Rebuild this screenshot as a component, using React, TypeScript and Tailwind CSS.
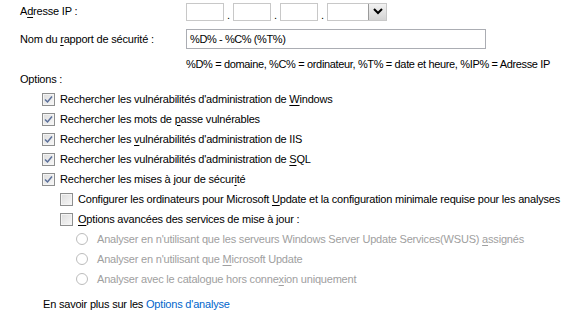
import React from 'react'

const font = { fontFamily: '"Liberation Sans", Arial, sans-serif' }

// Underlined accelerator letter, like a Windows dialog
function U({ children }: { children: React.ReactNode }) {
    return <span className="underline underline-offset-[2px]">{children}</span>
}

function CheckBox({ checked }: { checked: boolean }) {
    return (
        <div className="w-[13px] h-[13px] border border-[#8e8f8f] bg-gradient-to-br from-[#dcdcdc] to-[#f8f8f8] flex items-center justify-center shrink-0">
            <div className="w-[11px] h-[11px] border border-[#f4f4f4] flex items-center justify-center">
                {checked && (
                    <svg width="9" height="9" viewBox="0 0 9 9">
                        <path d="M1 4.5 L3.5 7 L8 1.5" fill="none" stroke="#5a6f9a" strokeWidth="1.5" />
                    </svg>
                )}
            </div>
        </div>
    )
}

function Radio() {
    return <div className="w-[12px] h-[12px] rounded-full border border-[#bcbcbc] bg-white shrink-0" />
}

function Row({ children, indent }: { children: React.ReactNode; indent: string }) {
    return <div className={`h-5 flex items-center ${indent}`}>{children}</div>
}

function IpBox() {
    return <div className="w-[38px] h-[18px] border border-[#c8c8c8] bg-white" />
}

export default function App() {
    return (
        <div className="w-[573px] h-[316px] bg-white text-[11px] tracking-[-0.2px] whitespace-nowrap text-black overflow-hidden pt-[2px]" style={font}>

            {/* IP address */}
            <div className="h-[19px] flex items-center">
                <div className="w-[186px] pl-[20px]">A<U>d</U>resse IP :</div>
                <div className="flex items-end gap-[2px]">
                    <IpBox />
                    <span className="w-[5px] text-center leading-none">.</span>
                    <IpBox />
                    <span className="w-[5px] text-center leading-none">.</span>
                    <IpBox />
                    <span className="w-[5px] text-center leading-none">.</span>
                    <div className="w-[60px] h-[18px] border border-[#c8c8c8] bg-white flex justify-end">
                        <div className="w-[18px] h-full border-l border-[#9a9a9a] bg-gradient-to-b from-[#f2f2f2] to-[#d4d4d4] flex items-center justify-center">
                            <svg width="10" height="7" viewBox="0 0 10 7">
                                <path d="M1 1 L5 5 L9 1" fill="none" stroke="#000" strokeWidth="2" />
                            </svg>
                        </div>
                    </div>
                </div>
            </div>

            {/* Report name */}
            <div className="h-[20px] mt-[8px] flex items-center">
                <div className="w-[186px] pl-[20px]">Nom du <U>r</U>apport de sécurité :</div>
                <div className="w-[300px] h-[20px] border border-[#abadb3] bg-white flex items-center px-[3px] tracking-[-0.4px]">
                    %D% - %C% (%T%)
                </div>
            </div>

            <div className="h-[14px] mt-[8px] pl-[186px] flex items-center tracking-[-0.35px]">
                %D% = domaine, %C% = ordinateur, %T% = date et heure, %IP% = Adresse IP
            </div>

            <div className="h-[14px] mt-px pl-[20px] flex items-center">Options :</div>

            <div className="mt-[3px]">
                <Row indent="pl-[42px] gap-[5px]">
                    <CheckBox checked />
                    <span>Rechercher les vulnérabilités d'administration de <U>W</U>indows</span>
                </Row>
                <Row indent="pl-[42px] gap-[5px]">
                    <CheckBox checked />
                    <span>Rechercher les mots de <U>p</U>asse vulnérables</span>
                </Row>
                <Row indent="pl-[42px] gap-[5px]">
                    <CheckBox checked />
                    <span>Rechercher les <U>v</U>ulnérabilités d'administration de IIS</span>
                </Row>
                <Row indent="pl-[42px] gap-[5px]">
                    <CheckBox checked />
                    <span>Rechercher les vulnérabilités d'administration de <U>S</U>QL</span>
                </Row>
                <Row indent="pl-[42px] gap-[5px]">
                    <CheckBox checked />
                    <span>Rechercher les mises à jour de sécur<U>i</U>té</span>
                </Row>
                <Row indent="pl-[60px] gap-[5px]">
                    <CheckBox checked={false} />
                    <span>Configurer les ordinateurs pour Microsoft <U>U</U>pdate et la configuration minimale requise pour les analyses</span>
                </Row>
                <Row indent="pl-[60px] gap-[5px]">
                    <CheckBox checked={false} />
                    <span><U>O</U>ptions avancées des services de mise à jour :</span>
                </Row>
                <div className="text-[#a0a0a0]">
                    <Row indent="pl-[76px] gap-[9px]">
                        <Radio />
                        <span>Analyser en n'utilisant que les serveurs Windows Server Update Services(WSUS) <U>a</U>ssignés</span>
                    </Row>
                    <Row indent="pl-[76px] gap-[9px]">
                        <Radio />
                        <span>Analyser en n'utilisant que <U>M</U>icrosoft Update</span>
                    </Row>
                    <Row indent="pl-[76px] gap-[9px]">
                        <Radio />
                        <span>Analyser avec le catalogue hors conne<U>x</U>ion uniquement</span>
                    </Row>
                </div>
            </div>

            <div className="h-5 mt-[5px] pl-[43px] flex items-center">
                En savoir plus sur les&nbsp;<span className="text-[#0066cc]">Options d'analyse</span>
            </div>
        </div>
    )
}
